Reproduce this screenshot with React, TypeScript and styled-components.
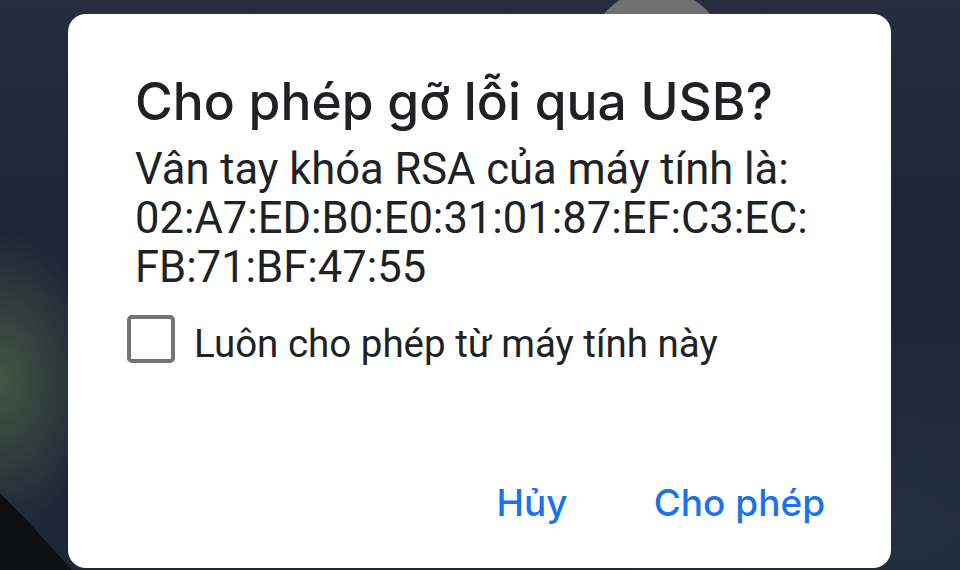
import React from "react";
import styled, { createGlobalStyle } from "styled-components";

const Global = createGlobalStyle`
  html, body { margin: 0; padding: 0; width: 960px; height: 570px; overflow: hidden; }
  #root { width: 960px; height: 570px; }
`;

const Screen = styled.div`
  position: relative;
  width: 960px;
  height: 570px;
  overflow: hidden;
  background:
    radial-gradient(ellipse 100px 150px at 0px 380px, rgba(74,94,70,0.85), rgba(60,84,64,0) 100%),
    radial-gradient(ellipse 300px 200px at 900px 520px, rgba(40,54,70,0.6), rgba(40,54,70,0) 100%),
    linear-gradient(180deg, #272d3d 0%, #1c2636 40%, #1c2838 100%);
  display: flex;
  justify-content: flex-start;
  padding: 14px 0 0 68px;
  box-sizing: border-box;
`;

const Mountain = styled.div`
  position: absolute;
  left: 0;
  bottom: 0;
  width: 90px;
  height: 110px;
  background: #0d0f12;
  clip-path: polygon(0 30%, 30% 55%, 80% 100%, 0 100%);
`;

const Blob = styled.div`
  position: absolute;
  left: 588px;
  top: -11px;
  width: 138px;
  height: 138px;
  border-radius: 50%;
  background: #707070;
`;

const Card = styled.div`
  position: relative;
  width: 823px;
  height: 554px;
  background: #ffffff;
  border-radius: 18px;
  box-sizing: border-box;
  padding: 57px 66px 0 67px;
  display: flex;
  flex-direction: column;
`;

const Title = styled.h1`
  margin: 0;
  font-family: Inter, "Open Sans", sans-serif;
  font-weight: 500;
  font-size: 51.5px;
  line-height: 60px;
  color: #202124;
  white-space: nowrap;
`;

const Body = styled.p`
  margin: 13.6px 0 0 0;
  font-family: Roboto, "Noto Sans", sans-serif;
  font-size: 43.5px;
  line-height: 49px;
  color: #202124;
  white-space: nowrap;
`;

const CheckRow = styled.label`
  display: flex;
  align-items: center;
  gap: 19px;
  margin: 19.5px 0 0 -8px;
`;

const Box = styled.span`
  width: 48px;
  height: 48px;
  box-sizing: border-box;
  border: 4.5px solid #737373;
  border-radius: 5px;
  flex: none;
`;

const CheckLabel = styled.span`
  padding-top: 10px;
  font-family: Roboto, "Noto Sans", sans-serif;
  font-size: 38.5px;
  color: #202124;
  white-space: nowrap;
`;

const Actions = styled.div`
  margin-top: auto;
  margin-bottom: 43px;
  display: flex;
  justify-content: flex-end;
  gap: 86px;
`;

const ActionButton = styled.span`
  font-family: Inter, "Open Sans", sans-serif;
  font-weight: 500;
  font-size: 37px;
  color: #1a73e8;
`;

export default function App() {
  return (
    <>
      <Global />
      <Screen>
        <Blob />
        <Mountain />
        <Card>
          <Title>Cho phép gỡ lỗi qua USB?</Title>
          <Body>
            Vân tay khóa RSA của máy tính là:
            <br />
            02:A7:ED:B0:E0:31:01:87:EF:C3:EC:
            <br />
            FB:71:BF:47:55
          </Body>
          <CheckRow>
            <Box />
            <CheckLabel>Luôn cho phép từ máy tính này</CheckLabel>
          </CheckRow>
          <Actions>
            <ActionButton>Hủy</ActionButton>
            <ActionButton>Cho phép</ActionButton>
          </Actions>
        </Card>
      </Screen>
    </>
  );
}
